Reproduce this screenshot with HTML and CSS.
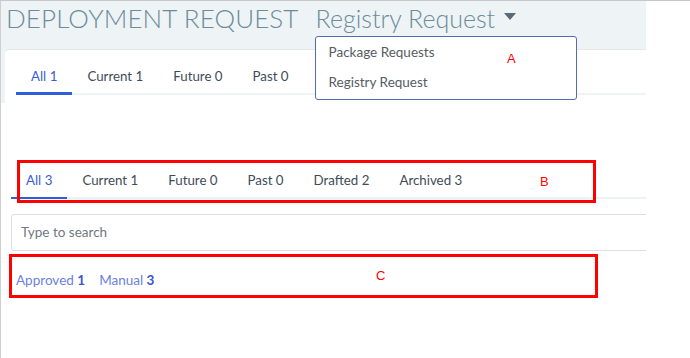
FILE: index.html
```html
<!DOCTYPE html>
<html lang="en">
<head>
<meta charset="utf-8">
<title>Deployment Request</title>
<link rel="stylesheet" href="styles.css">
</head>
<body>
<div class="frame">
  <div class="page">
    <header class="head">
      <div class="titlebar">
        <h1 class="title">DEPLOYMENT REQUEST</h1>
        <div class="switch">
          <span class="switch-label">Registry Request</span>
          <span class="caret"></span>
          <ul class="menu">
            <li class="menu-item">Package Requests</li>
            <li class="menu-item">Registry Request</li>
          </ul>
        </div>
      </div>
      <div class="card">
        <nav class="tabs tabs-top">
          <a class="tab active">All 1</a>
          <a class="tab">Current 1</a>
          <a class="tab">Future 0</a>
          <a class="tab">Past 0</a>
        </nav>
      </div>
    </header>
    <main class="content">
      <nav class="tabs tabs-main">
        <a class="tab active">All 3</a>
        <a class="tab">Current 1</a>
        <a class="tab">Future 0</a>
        <a class="tab">Past 0</a>
        <a class="tab">Drafted 2</a>
        <a class="tab">Archived 3</a>
      </nav>
      <div class="search">Type to search</div>
      <div class="filters">
        <a class="filter">Approved <b>1</b></a>
        <a class="filter">Manual <b>3</b></a>
      </div>
    </main>
  </div>
  <div class="mark mark-b"></div>
  <div class="mark mark-c"></div>
  <span class="label label-a">A</span>
  <span class="label label-b">B</span>
  <span class="label label-c">C</span>
</div>
</body>
</html>
```
FILE: styles.css
```css
* { box-sizing: border-box; }
html, body { margin: 0; padding: 0; background: #fff; }
body {
  font-family: Lato, "Open Sans", sans-serif;
  color: #3f4b58;
}
.frame {
  position: relative;
  width: 690px;
  height: 358px;
  border-top: 1px solid #c8c8c8;
  overflow: hidden;
}
.page {
  width: 646px;
  height: 357px;
  border-left: 1px solid #cfcfcf;
  overflow: hidden;
}
.head {
  background: #eef3f6;
  padding-left: 4px;
}
.titlebar {
  height: 49px;
  display: flex;
  align-items: baseline;
  padding-top: 2px;
  padding-left: 1px;
}
.title {
  margin: 0;
  font-size: 26px;
  font-weight: 300;
  line-height: 30px;
  color: #6b8c9b;
  letter-spacing: 0.1px;
}
.switch {
  position: relative;
  margin-left: 17px;
  display: flex;
  align-items: baseline;
  font-size: 25px;
  font-weight: 300;
  line-height: 30px;
  color: #6b8c9b;
}
.caret {
  width: 0;
  height: 0;
  margin-left: 9px;
  border-left: 6px solid transparent;
  border-right: 6px solid transparent;
  border-top: 7px solid #576c78;
  transform: translateY(-8px);
}
.menu {
  position: absolute;
  left: -1px;
  top: 33px;
  width: 262px;
  height: 64px;
  margin: 0;
  padding: 0;
  list-style: none;
  background: #fff;
  border: 1px solid #5868b8;
  border-radius: 3px;
  z-index: 2;
}
.menu-item {
  padding-left: 13px;
  font-size: 13.5px;
  font-weight: 400;
  line-height: 30px;
  color: #555c63;
}
.card {
  background: #fff;
  border-top-left-radius: 4px;
  padding: 0 0 8px 11px;
  box-shadow: 0 -1px 0 #e3e8eb;
}
.tabs {
  display: flex;
}
.tab {
  font-size: 13.3px;
  line-height: 16px;
  padding: 0 15px;
  color: #3f4b58;
  text-decoration: none;
  white-space: nowrap;
}
.tab.active { color: #3a5bd6; }
.tabs-top { box-shadow: inset 0 -2px 0 #eef3f6; }
.tabs-top .tab {
  padding-top: 18px;
  padding-bottom: 8px;
  border-bottom: 3px solid transparent;
}
.tabs-top .tab.active { border-bottom-color: #2f5ed8; }
.content {
  padding-left: 10px;
}
.tabs-main {
  margin-top: 57px;
  box-shadow: inset 0 -2px 0 #eef2f6;
}
.tabs-main .tab {
  padding-top: 12px;
  padding-bottom: 9px;
  border-bottom: 2px solid transparent;
}
.tabs-main .tab.active { border-bottom-color: #2f5ed8; }
.search {
  margin-top: 15px;
  width: 660px;
  height: 37px;
  border: 1px solid #dedede;
  border-radius: 3px;
  padding-left: 9px;
  font-size: 13.5px;
  line-height: 35px;
  color: #6f7780;
}
.filters {
  margin-top: 21px;
  display: flex;
  gap: 14px;
  padding-left: 5px;
  font-size: 13.5px;
  line-height: 16px;
}
.filter {
  color: #6b7fe0;
  text-decoration: none;
}
.filter b { color: #3956cf; font-weight: 700; }
.mark {
  position: absolute;
  border: 3px solid #ff0000;
}
.mark-b { left: 17px; top: 159px; width: 579px; height: 43px; }
.mark-c { left: 9px; top: 253px; width: 589px; height: 44px; }
.label {
  position: absolute;
  z-index: 5;
  font-family: "Liberation Sans", Arial, sans-serif;
  font-size: 13px;
  line-height: 14px;
  color: #ff0000;
}
.label-a { left: 507px; top: 51px; }
.label-b { left: 540px; top: 174px; }
.label-c { left: 376px; top: 268px; }
```
